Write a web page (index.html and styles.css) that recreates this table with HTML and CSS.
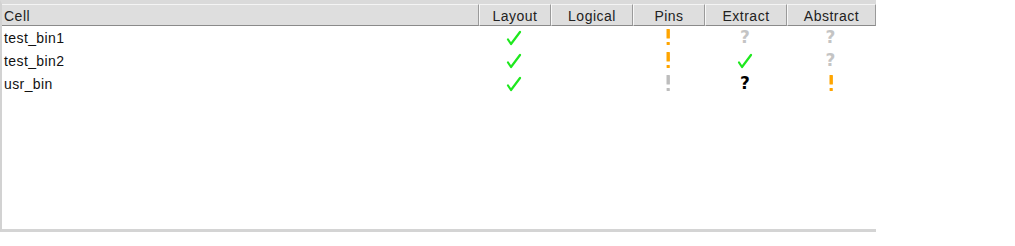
FILE: index.html
```html
<!DOCTYPE html>
<html>
<head>
<meta charset="utf-8">
<link rel="stylesheet" href="styles.css">
</head>
<body>
<div class="panel">
  <div class="grid">
    <div class="hd hd-first">Cell</div>
    <div class="hd">Layout</div>
    <div class="hd">Logical</div>
    <div class="hd">Pins</div>
    <div class="hd">Extract</div>
    <div class="hd">Abstract</div>

    <div class="name">test_bin1</div>
    <div class="ic"><svg class="chk" width="16" height="16" viewBox="0 0 16 16"><path d="M2 9.5 L5 14 L14 2"/></svg></div>
    <div class="ic"></div>
    <div class="ic"><svg class="exc" width="6" height="17" viewBox="0 0 6 17"><rect x="1.5" y="0" width="3.4" height="9.5" rx="0.6"/><rect x="1.6" y="13" width="3.2" height="3" rx="0.6"/></svg></div>
    <div class="ic"><span class="q q-gray">?</span></div>
    <div class="ic"><span class="q q-gray">?</span></div>

    <div class="name">test_bin2</div>
    <div class="ic"><svg class="chk" width="16" height="16" viewBox="0 0 16 16"><path d="M2 9.5 L5 14 L14 2"/></svg></div>
    <div class="ic"></div>
    <div class="ic"><svg class="exc" width="6" height="17" viewBox="0 0 6 17"><rect x="1.5" y="0" width="3.4" height="9.5" rx="0.6"/><rect x="1.6" y="13" width="3.2" height="3" rx="0.6"/></svg></div>
    <div class="ic"><svg class="chk" width="16" height="16" viewBox="0 0 16 16"><path d="M2 9.5 L5 14 L14 2"/></svg></div>
    <div class="ic"><span class="q q-gray">?</span></div>

    <div class="name">usr_bin</div>
    <div class="ic"><svg class="chk" width="16" height="16" viewBox="0 0 16 16"><path d="M2 9.5 L5 14 L14 2"/></svg></div>
    <div class="ic"></div>
    <div class="ic"><svg class="exc exc-gray" width="6" height="17" viewBox="0 0 6 17"><rect x="1.5" y="0" width="3.4" height="9.5" rx="0.6"/><rect x="1.6" y="13" width="3.2" height="3" rx="0.6"/></svg></div>
    <div class="ic"><span class="q q-black">?</span></div>
    <div class="ic"><svg class="exc" width="6" height="17" viewBox="0 0 6 17"><rect x="1.5" y="0" width="3.4" height="9.5" rx="0.6"/><rect x="1.6" y="13" width="3.2" height="3" rx="0.6"/></svg></div>
  </div>
</div>
</body>
</html>
```
FILE: styles.css
```css
html, body {
  margin: 0;
  padding: 0;
  background: #ffffff;
}
body {
  font-family: "Liberation Sans", Arial, sans-serif;
  font-size: 14px;
  color: #111;
}
.panel {
  width: 874px;
  height: 225px;
  border-top: 4px solid #dadada;
  border-left: 2px solid #d2d2d2;
  border-bottom: 3px solid #d4d4d4;
  background: #fff;
}
.grid {
  display: grid;
  grid-template-columns: 477px 72px 82px 72px 82px 89px;
  grid-auto-rows: 23px;
  grid-template-rows: 22px;
}
.hd {
  box-sizing: border-box;
  background: #dedede;
  border-top: 1px solid #f4f4f4;
  border-left: 1px solid #f8f8f8;
  border-right: 1px solid #9a9a9a;
  border-bottom: 1px solid #8a8a8a;
  display: flex;
  align-items: center;
  justify-content: center;
  color: #222;
  font-size: 14px;
  letter-spacing: 0.5px;
  padding-top: 1px;
}
.hd-first {
  justify-content: flex-start;
  padding-left: 2px;
  border-left: none;
}
.name {
  display: flex;
  align-items: center;
  padding-left: 2px;
  padding-top: 1px;
  letter-spacing: 0.4px;
  color: #111;
}
.ic {
  display: flex;
  align-items: center;
  justify-content: center;
  padding-right: 2px;
}
.chk path {
  fill: none;
  stroke: #1ee81e;
  stroke-width: 2.2;
  stroke-linecap: round;
  stroke-linejoin: round;
}
.exc rect { fill: #ffa500; }
.exc-gray rect { fill: #bdbdbd; }
.q {
  font-family: "DejaVu Sans", sans-serif;
  font-weight: bold;
  font-size: 17px;
  line-height: 1;
}
.q-gray { color: #c4c4c4; }
.q-black { color: #000; }
```
